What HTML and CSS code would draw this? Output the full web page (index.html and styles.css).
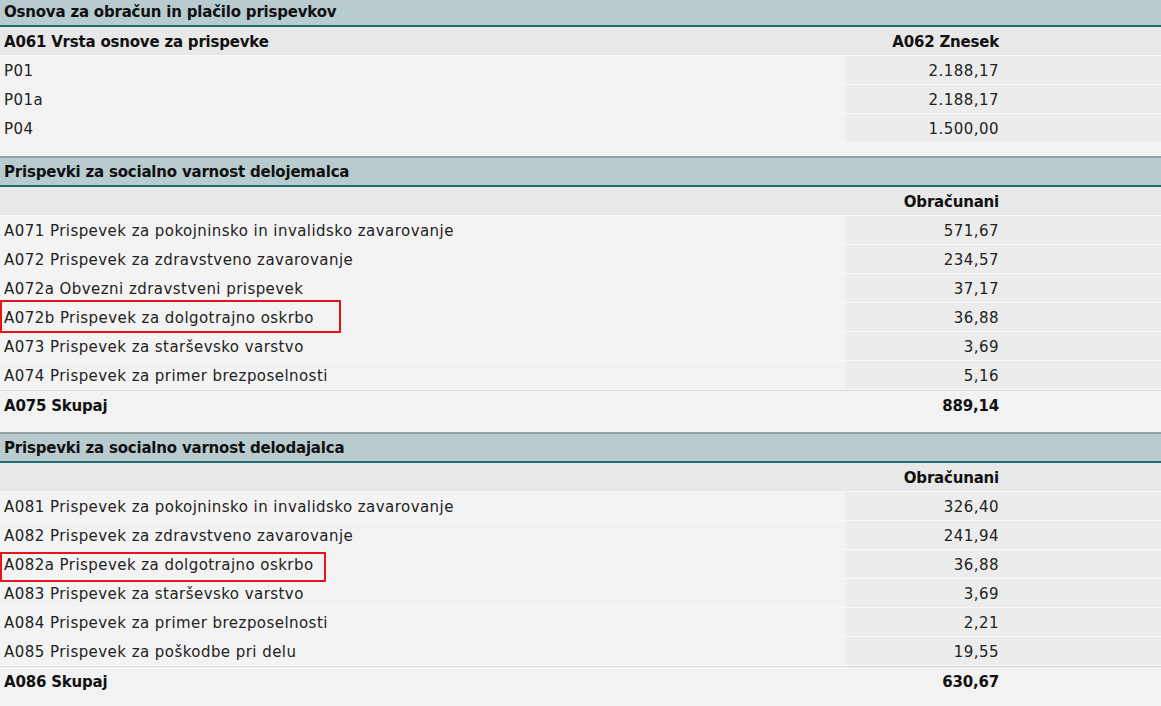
FILE: index.html
```html
<!DOCTYPE html>
<html lang="sl">
<head>
    <meta charset="UTF-8">
    <meta name="viewport" content="width=device-width, initial-scale=1.0">
    <title>Prispevki</title>
    <link rel="stylesheet" href="styles.css">
</head>
<body>
    <div class="page">
        <div class="section">
            <div class="section-title">Osnova za obračun in plačilo prispevkov</div>
            <div class="row head">
                <div class="label">A061 Vrsta osnove za prispevke</div>
                <div class="value">A062 Znesek</div>
            </div>
            <div class="row">
                <div class="label">P01</div>
                <div class="value">2.188,17</div>
            </div>
            <div class="row">
                <div class="label">P01a</div>
                <div class="value">2.188,17</div>
            </div>
            <div class="row">
                <div class="label">P04</div>
                <div class="value">1.500,00</div>
            </div>
        </div>

        <div class="section">
            <div class="section-title">Prispevki za socialno varnost delojemalca</div>
            <div class="row head">
                <div class="label"></div>
                <div class="value">Obračunani</div>
            </div>
            <div class="row">
                <div class="label">A071 Prispevek za pokojninsko in invalidsko zavarovanje</div>
                <div class="value">571,67</div>
            </div>
            <div class="row">
                <div class="label">A072 Prispevek za zdravstveno zavarovanje</div>
                <div class="value">234,57</div>
            </div>
            <div class="row">
                <div class="label">A072a Obvezni zdravstveni prispevek</div>
                <div class="value">37,17</div>
            </div>
            <div class="row">
                <div class="label mark mark-a">A072b Prispevek za dolgotrajno oskrbo</div>
                <div class="value">36,88</div>
            </div>
            <div class="row">
                <div class="label">A073 Prispevek za starševsko varstvo</div>
                <div class="value">3,69</div>
            </div>
            <div class="row">
                <div class="label">A074 Prispevek za primer brezposelnosti</div>
                <div class="value">5,16</div>
            </div>
            <div class="row total">
                <div class="label">A075 Skupaj</div>
                <div class="value">889,14</div>
            </div>
        </div>

        <div class="section">
            <div class="section-title">Prispevki za socialno varnost delodajalca</div>
            <div class="row head">
                <div class="label"></div>
                <div class="value">Obračunani</div>
            </div>
            <div class="row">
                <div class="label">A081 Prispevek za pokojninsko in invalidsko zavarovanje</div>
                <div class="value">326,40</div>
            </div>
            <div class="row">
                <div class="label">A082 Prispevek za zdravstveno zavarovanje</div>
                <div class="value">241,94</div>
            </div>
            <div class="row">
                <div class="label mark mark-b">A082a Prispevek za dolgotrajno oskrbo</div>
                <div class="value">36,88</div>
            </div>
            <div class="row">
                <div class="label">A083 Prispevek za starševsko varstvo</div>
                <div class="value">3,69</div>
            </div>
            <div class="row">
                <div class="label">A084 Prispevek za primer brezposelnosti</div>
                <div class="value">2,21</div>
            </div>
            <div class="row">
                <div class="label">A085 Prispevek za poškodbe pri delu</div>
                <div class="value">19,55</div>
            </div>
            <div class="row total">
                <div class="label">A086 Skupaj</div>
                <div class="value">630,67</div>
            </div>
        </div>
    </div>
</body>
</html>
```

FILE: styles.css
```css
body {
    margin: 0;
    background: #f2f2f2;
    color: #222;
    font-family: "DejaVu Sans", Verdana, sans-serif;
    font-size: 15px;
    letter-spacing: 0.45px;
}

.page {
    margin-top: -4px;
}

.section {
    margin-bottom: 13px;
}

.section-title {
    background: #b8cbcf;
    border-top: 2px solid #8fa3a8;
    border-bottom: 2px solid #1b6d76;
    height: 27px;
    line-height: 28px;
    padding-left: 4px;
    font-weight: bold;
    letter-spacing: -0.2px;
    color: #111;
}

.row {
    display: flex;
    height: 28px;
    line-height: 31px;
    border-bottom: 1px solid #f8f8f8;
}

.label {
    width: 842px;
    padding-left: 4px;
    background: #f3f3f3;
    white-space: nowrap;
}

.value {
    flex: 1;
    padding-right: 162px;
    text-align: right;
    background: #ececec;
}

.head .label,
.head .value {
    background: #e8e8e8;
    font-weight: bold;
    letter-spacing: -0.2px;
    color: #111;
}

.total {
    border-bottom: none;
    border-top: 1px solid #dadada;
}

.total .label,
.total .value {
    background: #f2f2f2;
    font-weight: bold;
    letter-spacing: -0.2px;
    color: #111;
}

/* rdeči okvir za označene vrstice */
.mark {
    position: relative;
}

.mark::after {
    content: "";
    position: absolute;
    left: 0;
    border: 2px solid #e8141c;
}

.mark-a::after {
    top: -3px;
    width: 337px;
    height: 29px;
}

.mark-b::after {
    top: 2px;
    width: 322px;
    height: 26px;
}
```
